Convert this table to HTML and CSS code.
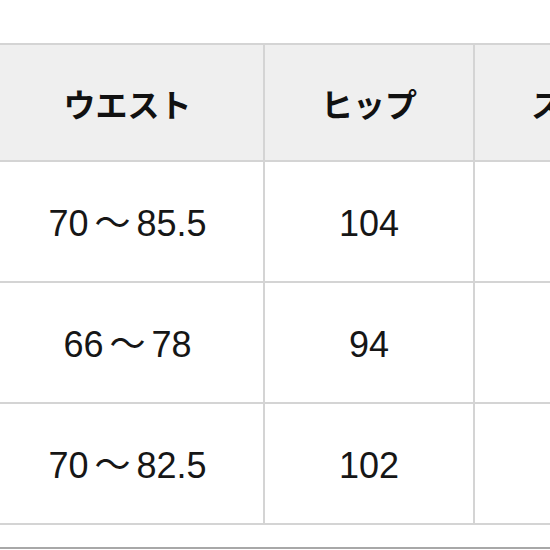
FILE: index.html
```html
<!DOCTYPE html>
<html lang="ja">
<head>
<meta charset="utf-8">
<link rel="stylesheet" href="styles.css">
</head>
<body>
<div class="page">
  <table class="size-table">
    <thead>
      <tr>
        <th class="col-first">ウエスト</th>
        <th>ヒップ</th>
        <th>スソ幅</th>
      </tr>
    </thead>
    <tbody>
      <tr>
        <td class="col-first">70<span class="tilde">～</span>85.5</td>
        <td>104</td>
        <td></td>
      </tr>
      <tr>
        <td class="col-first">66<span class="tilde">～</span>78</td>
        <td>94</td>
        <td></td>
      </tr>
      <tr>
        <td class="col-first">70<span class="tilde">～</span>82.5</td>
        <td>102</td>
        <td></td>
      </tr>
    </tbody>
  </table>
  <div class="bottom-rule"></div>
</div>
</body>
</html>
```
FILE: styles.css
```css
html, body {
  margin: 0;
  padding: 0;
  background: #ffffff;
}
body {
  width: 550px;
  height: 550px;
  overflow: hidden;
  font-family: "Liberation Sans", "Noto Sans CJK JP", sans-serif;
  color: #111111;
}
.page {
  padding-top: 43px;
  width: 550px;
  overflow: hidden;
}
.size-table {
  border-collapse: collapse;
  margin-left: -10px;
}
.size-table th,
.size-table td {
  border: 2px solid #d4d4d4;
  text-align: center;
  vertical-align: middle;
  padding: 0;
  width: 208px;
  min-width: 208px;
  max-width: 208px;
  box-sizing: content-box;
}
.size-table .col-first {
  width: 271px;
  min-width: 271px;
  max-width: 271px;
}
.size-table th {
  background: #efefef;
  height: 115px;
  font-family: "Noto Sans CJK JP", sans-serif;
  font-weight: 700;
  font-size: 32px;
  white-space: nowrap;
}
.size-table td {
  height: 115px;
  padding-top: 4px;
  font-size: 36px;
  line-height: 40px;
  font-weight: 400;
  color: #161616;
  white-space: nowrap;
}
.tilde {
  font-family: "Noto Sans CJK JP", sans-serif;
  line-height: 0;
  margin: 0 6px;
}
.bottom-rule {
  margin-top: 22px;
  border-top: 2px solid #a8a8a8;
}
```
